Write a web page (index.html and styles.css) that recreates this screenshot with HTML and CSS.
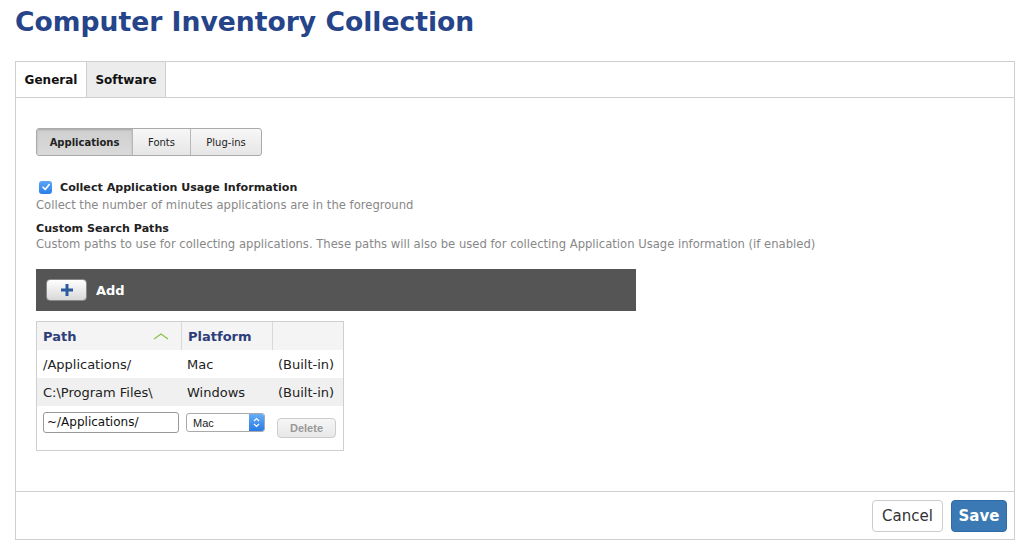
FILE: index.html
```html
<!DOCTYPE html>
<html>
<head>
<meta charset="utf-8">
<link rel="stylesheet" href="styles.css">
</head>
<body>
<h1 class="title">Computer Inventory Collection</h1>
<div class="panel">
  <div class="tabs">
    <div class="tab active">General</div>
    <div class="tab">Software</div>
  </div>
  <div class="content">
    <div class="segmented">
      <div class="seg pressed">Applications</div>
      <div class="seg">Fonts</div>
      <div class="seg">Plug-ins</div>
    </div>
    <div class="check-row">
      <span class="checkbox"><svg width="10" height="10" viewBox="0 0 10 10"><path d="M2 5.2 L4.2 7.4 L8.2 2.6" fill="none" stroke="#fff" stroke-width="1.6" stroke-linecap="round" stroke-linejoin="round"/></svg></span>
      <span class="label">Collect Application Usage Information</span>
    </div>
    <div class="desc">Collect the number of minutes applications are in the foreground</div>
    <div class="label heading">Custom Search Paths</div>
    <div class="desc">Custom paths to use for collecting applications. These paths will also be used for collecting Application Usage information (if enabled)</div>
    <div class="addbar">
      <div class="addbtn"><svg width="14" height="14" viewBox="0 0 14 14"><path d="M7 1 V13 M1 7 H13" stroke="#2c5aa0" stroke-width="3"/></svg></div>
      <span class="addlabel">Add</span>
    </div>
    <div class="table">
      <div class="row head">
        <div class="cell c1">Path <svg class="sort" width="16" height="8" viewBox="0 0 16 8"><path d="M1 7 L8 2 L15 7" fill="none" stroke="#8bc34a" stroke-width="1.3"/></svg></div>
        <div class="cell c2">Platform</div>
        <div class="cell c3"></div>
      </div>
      <div class="row">
        <div class="cell c1">/Applications/</div>
        <div class="cell c2">Mac</div>
        <div class="cell c3">(Built-in)</div>
      </div>
      <div class="row alt">
        <div class="cell c1">C:\Program Files\</div>
        <div class="cell c2">Windows</div>
        <div class="cell c3">(Built-in)</div>
      </div>
      <div class="row edit">
        <div class="cell c1"><div class="input">~/Applications/</div></div>
        <div class="cell c2"><div class="select"><span>Mac</span><span class="arrows"><svg width="7" height="11" viewBox="0 0 7 11"><path d="M1 4 L3.5 1.5 L6 4 M1 7 L3.5 9.5 L6 7" fill="none" stroke="#fff" stroke-width="1.2"/></svg></span></div></div>
        <div class="cell c3"><div class="delbtn">Delete</div></div>
      </div>
    </div>
  </div>
  <div class="footer">
    <div class="btn cancel">Cancel</div>
    <div class="btn save">Save</div>
  </div>
</div>
</body>
</html>
```
FILE: styles.css
```css
* { box-sizing: border-box; }
html, body { margin: 0; padding: 0; background: #fff; }
body {
  font-family: "DejaVu Sans", "Liberation Sans", sans-serif;
  color: #222;
  padding: 0 10px 0 15px;
}
.title {
  margin: 0;
  height: 61px;
  padding-top: 6px;
  font-size: 26.6px;
  line-height: 32px;
  font-weight: bold;
  color: #25448a;
  letter-spacing: 0;
}
.panel {
  width: 1000px;
  border: 1px solid #cfcfcf;
}
.tabs {
  display: flex;
  height: 36px;
  border-bottom: 1px solid #cfcfcf;
}
.tab {
  display: flex;
  align-items: center;
  justify-content: center;
  font-size: 12px;
  font-weight: bold;
  color: #111;
}
.tab.active { width: 70px; background: #fff; }
.tab:not(.active) {
  width: 80px;
  background: #ececec;
  border-left: 1px solid #cfcfcf;
  border-right: 1px solid #cfcfcf;
}
.content {
  height: 393px;
  padding: 30px 20px 0 20px;
}
.segmented {
  display: flex;
  width: 226px;
  height: 28px;
  border: 1px solid #aaa;
  border-radius: 3px;
  overflow: hidden;
  background: linear-gradient(#f7f7f7, #e6e6e6);
  font-size: 10px;
  color: #222;
}
.seg {
  display: flex;
  align-items: center;
  justify-content: center;
  border-left: 1px solid #b8b8b8;
}
.seg:nth-child(1) { width: 95px; border-left: none; }
.seg:nth-child(2) { width: 58px; }
.seg:nth-child(3) { flex: 1; }
.seg.pressed {
  background: linear-gradient(#cfcfcf, #dadada);
  font-weight: bold;
  box-shadow: inset 0 1px 2px rgba(0,0,0,0.2);
}
.check-row {
  display: flex;
  align-items: center;
  margin-top: 24px;
  height: 14px;
}
.checkbox {
  width: 13px;
  height: 13px;
  margin-left: 3px;
  margin-right: 8px;
  border-radius: 3px;
  background: linear-gradient(#5da5f5, #2b7ee8);
  display: flex;
  align-items: center;
  justify-content: center;
}
.label {
  font-size: 11.1px;
  font-weight: bold;
  color: #222;
}
.heading { margin-top: 8px; line-height: 15px; }
.desc {
  font-size: 11.6px;
  color: #888;
  line-height: 15px;
  margin-top: 3px;
}
.check-row + .desc { margin-top: 4px; }
.heading + .desc { margin-top: 1px; }
.addbar {
  margin-top: 17px;
  width: 600px;
  height: 42px;
  background: #555;
  display: flex;
  align-items: center;
  padding-left: 10px;
}
.addbtn {
  width: 41px;
  height: 22px;
  border-radius: 4px;
  background: linear-gradient(#ffffff, #d8d8d8);
  border: 1px solid #888;
  display: flex;
  align-items: center;
  justify-content: center;
}
.addlabel {
  margin-left: 9px;
  color: #fff;
  font-weight: bold;
  font-size: 13px;
}
.table {
  margin-top: 10px;
  width: 308px;
  border: 1px solid #cfcfcf;
  height: 130px;
}
.row {
  display: flex;
  height: 28px;
  font-size: 13px;
  color: #222;
}
.row.head {
  height: 28px;
  background: #f4f4f4;
  font-weight: bold;
  color: #2d3e7a;
}
.row.alt { background: #f0f0f0; }
.cell {
  display: flex;
  align-items: center;
  padding-left: 6px;
}
.c1 { width: 144px; }
.c2 { width: 91px; }
.c3 { flex: 1; }
.head .c1 { justify-content: space-between; padding-right: 12px; }
.head .c2, .head .c3 { border-left: 1px solid #d8d8d8; }
.row.edit { height: 33px; }
.input {
  width: 136px;
  height: 21px;
  border: 1px solid #999;
  border-radius: 3px;
  font-size: 12px;
  padding: 2px 3px;
  color: #111;
  background: #fff;
}
.select {
  width: 79px;
  height: 19px;
  margin-left: -1px;
  border: 1px solid #aaa;
  border-radius: 3px;
  font-family: "Liberation Sans", sans-serif;
  font-size: 11px;
  display: flex;
  align-items: center;
  justify-content: space-between;
  padding-left: 6px;
  background: #fff;
  overflow: hidden;
}
.arrows {
  width: 15px;
  height: 100%;
  background: linear-gradient(#66aef7, #2a7ae4);
  display: flex;
  align-items: center;
  justify-content: center;
}
.delbtn {
  margin-left: -1px;
  margin-top: 10px;
  width: 59px;
  height: 20px;
  border: 1px solid #ccc;
  border-radius: 4px;
  background: linear-gradient(#f6f6f6, #e8e8e8);
  color: #999;
  font-family: "Liberation Sans", sans-serif;
  font-weight: bold;
  font-size: 11px;
  display: flex;
  align-items: center;
  justify-content: center;
}
.footer {
  border-top: 1px solid #cfcfcf;
  height: 48px;
  display: flex;
  justify-content: flex-end;
  align-items: flex-start;
  padding-top: 8px;
  padding-right: 7px;
  gap: 8px;
}
.btn {
  height: 32px;
  border-radius: 4px;
  font-size: 15px;
  display: flex;
  align-items: center;
  justify-content: center;
}
.cancel {
  width: 71px;
  border: 1px solid #ccc;
  color: #333;
  background: #fff;
}
.save {
  width: 56px;
  background: #3a79b4;
  border: 1px solid #2f6ca5;
  color: #fff;
  font-weight: bold;
}
```
